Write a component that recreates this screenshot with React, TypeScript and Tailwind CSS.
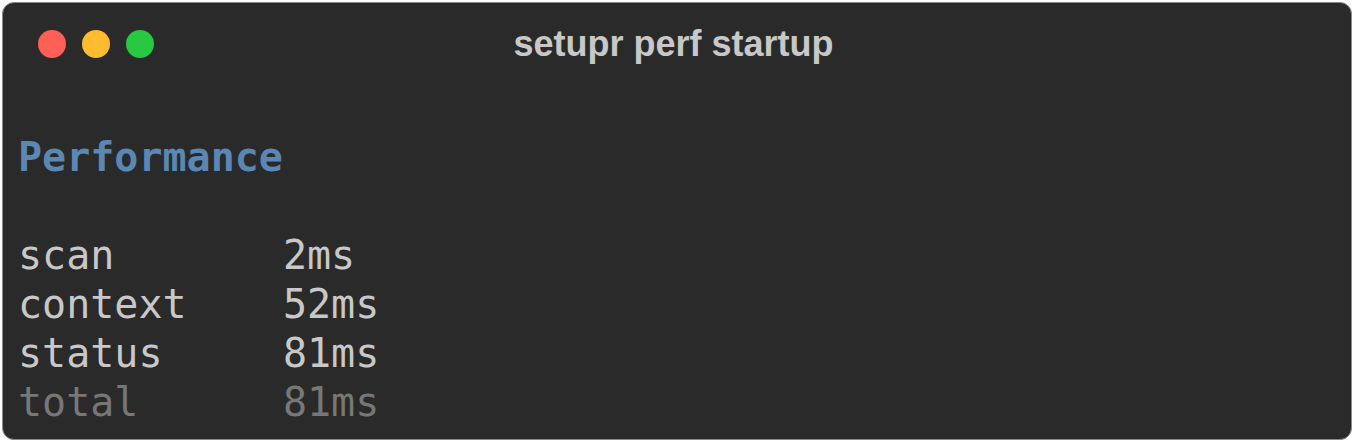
import React from "react";

const rows: { k: string; v: string; dim?: boolean }[] = [
  { k: "scan", v: "2ms" },
  { k: "context", v: "52ms" },
  { k: "status", v: "81ms" },
  { k: "total", v: "81ms", dim: true },
];

export default function App() {
  return (
    <div className="w-[1354px] h-[442px] bg-white p-[2px] pb-[2px]">
      <div className="relative h-[438px] w-[1350px] rounded-[12px] border border-[#8a8a8a] bg-[#2a2a2a] overflow-hidden">
        <div className="relative flex h-[81px] items-center pl-[35px] gap-[16px]">
          <span className="block h-[28px] w-[28px] rounded-full bg-[#ff5f57]" />
          <span className="block h-[28px] w-[28px] rounded-full bg-[#febc2e]" />
          <span className="block h-[28px] w-[28px] rounded-full bg-[#28c840]" />
          <div className="absolute inset-0 flex items-center justify-center pr-[7px] text-[36px] font-bold text-[#c8c8c8] font-['Liberation_Sans',Arial,sans-serif]">
            setupr perf startup
          </div>
        </div>
        <div className="pl-[15px] pt-[49px] font-['DejaVu_Sans_Mono',monospace] text-[40px] leading-[49px] whitespace-pre">
          <div className="font-bold text-[#5a87b4]">Performance</div>
          <div>&nbsp;</div>
          {rows.map((r) => (
            <div key={r.k} className={r.dim ? "text-[#777777]" : "text-[#c8c8c8]"}>
              {r.k.padEnd(11, " ")}
              {r.v}
            </div>
          ))}
        </div>
      </div>
    </div>
  );
}
